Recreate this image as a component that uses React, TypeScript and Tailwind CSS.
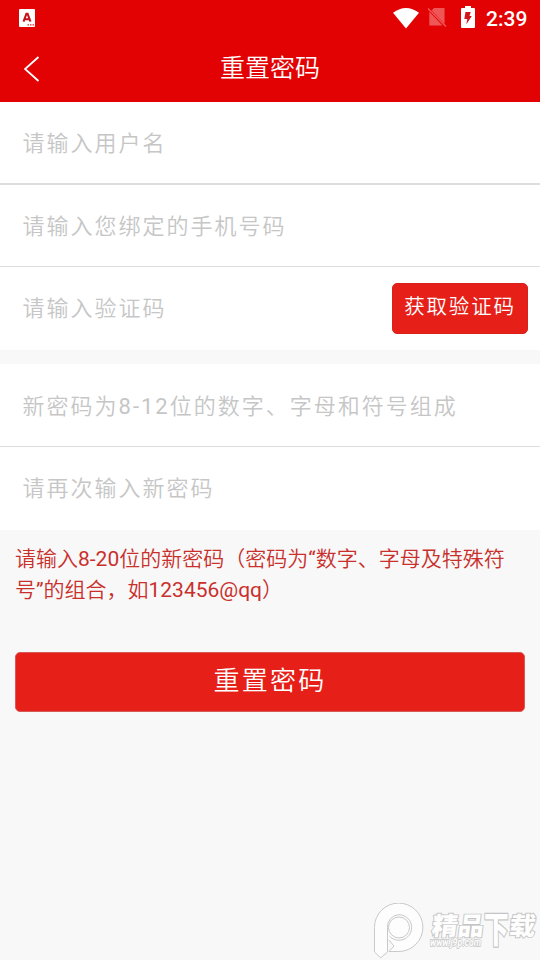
import type { ReactNode } from "react";

function StatusBar() {
  return (
    <div className="flex h-9 items-center justify-between pl-[19px] pr-3">
      <svg width="16" height="18" viewBox="0 0 16 18">
        <rect width="16" height="18" rx="1" fill="#fff" />
        <path d="M4.500 12.600 7.400 4.800h1.200l2.900 7.800M5.900 10.200h4.200" fill="none" stroke="#c8101a" strokeWidth="2" />
        <path d="M8.500 15.800h1.500M11 15.800h1.500M13.500 15.800h1.500" stroke="#d22" strokeWidth="1.300" />
      </svg>
      <div className="flex h-9 items-center">
        <svg width="26" height="21" viewBox="0 0 26 21">
          <path d="M0 4.700Q13-4.700 26 4.700L13 20.600Z" fill="#fff" />
        </svg>
        <svg className="ml-[8px]" width="20" height="20" viewBox="0 0 20 20">
          <path d="M7 0h10.500v15.800L4.600 2.400ZM2.300 3.800 15.500 17.500H2.300Z" fill="#ef5656" />
          <path d="m1 .5 18 18" stroke="#ef5656" strokeWidth="1.500" />
        </svg>
        <svg className="ml-[14px] mb-0.5" width="14" height="22" viewBox="0 0 14 22">
          <path d="M4 0h6v2h3q1 0 1 1v18q0 1-1 1H1q-1 0-1-1V3q0-1 1-1h3Z" fill="#fff" />
          <path d="M4.500 6h5.200L8.500 10h2.300L5.300 18.500 6.300 13H3.300Z" fill="#d4141c" />
        </svg>
        <span className="ml-[11px] mt-[2px] w-[42px] whitespace-nowrap text-[21px] font-medium leading-6 text-white">2:39</span>
      </div>
    </div>
  );
}

function Field({ placeholder, height, children }: { placeholder: ReactNode; height: string; children?: ReactNode }) {
  return (
    <div className={`flex items-center justify-between bg-white pl-[22.500px] pr-3 ${height}`}>
      <span className="whitespace-nowrap text-[22px] font-[350] tracking-[2px] text-[#c6c6c6]">{placeholder}</span>
      {children}
    </div>
  );
}

function Watermark() {
  return (
    <svg width="168" height="57" viewBox="0 0 168 57">
      <g fill="#fdfdfd" stroke="#c9c9c9" strokeWidth="1">
        <path d="M15.500 24.500V49l-6.800 5.800-6.200-5.800V24.500a24.200 24.200 0 1 1 24.500 24H17l5-5.500-5-6" />
        <path d="M15.500 37V24.500a12 12 0 0 1 11.500-12.800 12.800 12.800 0 1 1-9.500 21.500" />
        <circle cx="27" cy="24.500" r="10.500" />
      </g>
      <g fill="#fefefe" stroke="#c4c4c4" strokeWidth="1.800" paintOrder="stroke" fontWeight="900">
        <g transform="translate(59 31.500) skewX(-7)">
          <text fontSize="25" textLength="52" lengthAdjust="spacingAndGlyphs">精品</text>
        </g>
        <g transform="translate(112 40) scale(.95 1.380)">
          <text fontSize="26">下</text>
        </g>
        <g transform="translate(136.500 31.500) skewX(-7)">
          <text fontSize="25" textLength="26" lengthAdjust="spacingAndGlyphs">载</text>
        </g>
      </g>
      <text x="58" y="43" fontSize="10" fontWeight="700" fontStyle="italic" textLength="51" lengthAdjust="spacingAndGlyphs" fill="#fefefe" stroke="#c4c4c4" strokeWidth="1.300" paintOrder="stroke">www.j9p.com</text>
    </svg>
  );
}

export default function App() {
  return (
    <main className="flex h-[960px] w-[540px] flex-col overflow-hidden bg-[#f8f8f8] font-[Roboto,'Noto_Sans_CJK_SC',sans-serif]">
      <header className="h-[102px] shrink-0 bg-[#e20204]">
        <StatusBar />
        <div className="grid h-[66px] grid-cols-[60px_1fr_60px] items-center">
          <svg className="ml-6" width="16" height="26" viewBox="0 0 16 26">
            <path d="M14.500 1 1 13l13.500 12" fill="none" stroke="#fff" strokeWidth="1.800" />
          </svg>
          <h1 className="text-center text-[25px] font-[350] leading-[62px] text-white">重置密码</h1>
        </div>
      </header>
      <section>
        <Field placeholder="请输入用户名" height="h-[83px] border-b-2 border-[#dddddd] pt-0.5" />
        <Field placeholder="请输入您绑定的手机号码" height="h-[82px] border-b border-[#dddddd] pt-0.5" />
        <Field placeholder="请输入验证码" height="h-[83px]">
          <button className="h-[51px] w-[136px] whitespace-nowrap rounded-[5px] border border-[#d9211c] bg-[#e62019] pb-[2px] text-[20.500px] font-[350] leading-[47px] tracking-[1.800px] text-white">获取验证码</button>
        </Field>
      </section>
      <section className="mt-[14px]">
        <Field
          placeholder={<>新密码为<span className="font-normal">8-12</span>位的数字、字母和符号组成</>}
          height="h-[83px] border-b border-[#dddddd] pt-0.5"
        />
        <Field placeholder="请再次输入新密码" height="h-[83px]" />
      </section>
      <p className="mt-[14px] whitespace-nowrap pl-[15px] text-[21px] leading-[31px] font-[350] text-[#c9302c]">
        请输入<span className="font-normal">8-20</span>位的新密码（密码为<span className="font-normal">“</span>数字、字母及特殊符
        <br />
        号<span className="font-normal">”</span>的组合，如<span className="font-normal">123456@qq</span>）
      </p>
      <button className="mx-[15px] mt-[46px] h-[60px] shrink-0 rounded-[5px] border border-[#d65b56] bg-[#e62019] pb-0.5 text-[26px] font-[350] leading-[54px] tracking-[2.200px] text-white">重置密码</button>
      <div className="mt-auto flex justify-end">
        <Watermark />
      </div>
    </main>
  );
}
